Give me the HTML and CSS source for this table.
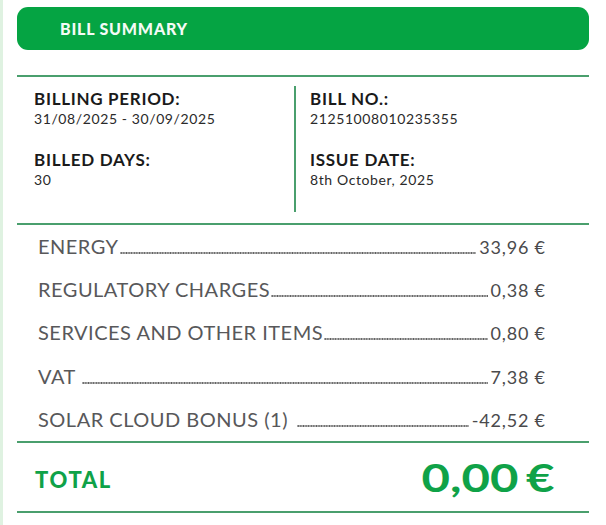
FILE: index.html
```html
<!DOCTYPE html>
<html>
<head>
<meta charset="utf-8">
<link rel="stylesheet" href="styles.css">
</head>
<body>
<div class="page">
  <div class="sheet">
    <div class="header">BILL SUMMARY</div>
    <div class="info">
      <div class="col col-left">
        <div class="field">
          <div class="label">BILLING PERIOD:</div>
          <div class="value">31/08/2025 - 30/09/2025</div>
        </div>
        <div class="field">
          <div class="label">BILLED DAYS:</div>
          <div class="value">30</div>
        </div>
      </div>
      <div class="col col-right">
        <div class="field">
          <div class="label">BILL NO.:</div>
          <div class="value">21251008010235355</div>
        </div>
        <div class="field">
          <div class="label">ISSUE DATE:</div>
          <div class="value">8th October, 2025</div>
        </div>
      </div>
    </div>
    <div class="rows">
      <div class="row"><span class="lbl">ENERGY</span><span class="dots"></span><span class="amt">33,96 €</span></div>
      <div class="row"><span class="lbl">REGULATORY CHARGES</span><span class="dots"></span><span class="amt">0,38 €</span></div>
      <div class="row"><span class="lbl">SERVICES AND OTHER ITEMS</span><span class="dots"></span><span class="amt">0,80 €</span></div>
      <div class="row"><span class="lbl">VAT</span><span class="dots spaced"></span><span class="amt">7,38 €</span></div>
      <div class="row"><span class="lbl">SOLAR CLOUD BONUS (1)</span><span class="dots spaced-lg"></span><span class="amt">-42,52 €</span></div>
    </div>
    <div class="total">
      <span class="total-label">TOTAL</span>
      <span class="total-amt">0,00<span class="euro">€</span></span>
    </div>
  </div>
</div>
</body>
</html>
```

FILE: styles.css
```css
html, body {
  margin: 0;
  padding: 0;
  background: #ffffff;
}

.page {
  width: 606px;
  height: 525px;
  box-sizing: border-box;
  border-left: 3px solid #dff2e1;
  font-family: "Lato", "Liberation Sans", sans-serif;
  color: #1b1b1b;
}

.sheet {
  width: 572px;
  margin-left: 14px;
  padding-top: 7px;
}

.header {
  height: 43px;
  line-height: 43px;
  border-radius: 11px;
  background: #05a443;
  color: #f4fbf6;
  font-weight: 900;
  font-size: 16px;
  letter-spacing: 0.8px;
  padding-left: 43px;
}

.info {
  margin-top: 25px;
  border-top: 2px solid #4a9f6d;
  padding: 9px 0 11px;
  display: grid;
  grid-template-columns: 277px 1fr;
}

.col {
  height: 126px;
  box-sizing: border-box;
  padding-top: 3px;
}

.col-left {
  padding-left: 17px;
}

.col-right {
  border-left: 2px solid #4a9f6d;
  padding-left: 14px;
}

.field + .field {
  margin-top: 23px;
}

.label {
  font-size: 17px;
  line-height: 19px;
  font-weight: 700;
  letter-spacing: 0.7px;
  color: #1a1a1a;
}

.value {
  margin-top: 2px;
  font-size: 14px;
  line-height: 17px;
  letter-spacing: 0.6px;
  color: #2a2a2a;
}

.rows {
  border-top: 2px solid #4a9f6d;
}

.row {
  height: 43.2px;
  display: flex;
  align-items: baseline;
  padding: 0 44px 0 21px;
  line-height: 43.2px;
  font-size: 20px;
  letter-spacing: 0.5px;
  color: #58585a;
}

.lbl {
  white-space: nowrap;
}

.dots {
  flex: 1;
  height: 2px;
  margin: 0 3px 0 1px;
  background-image: radial-gradient(circle, #5e5e5e 0.85px, transparent 1.15px);
  background-size: 2.6px 2px;
  background-repeat: repeat-x;
  background-position: 0 0;
}

.dots.spaced {
  margin-left: 6px;
}

.dots.spaced-lg {
  margin-left: 9px;
}

.amt {
  font-size: 18px;
  letter-spacing: 0.8px;
  margin-right: -0.8px;
  color: #4a4a4c;
  white-space: nowrap;
}

.total {
  border-top: 2px solid #4a9f6d;
  border-bottom: 2px solid #4a9f6d;
  height: 68px;
  display: flex;
  align-items: center;
  justify-content: space-between;
  padding: 0 34px 0 18px;
  color: #0fa248;
}

.total-label {
  font-size: 22px;
  font-weight: 900;
  letter-spacing: 1.6px;
  padding-top: 5px;
}

.total-amt {
  display: inline-block;
  font-size: 39px;
  font-weight: 700;
  transform: scaleX(1.26);
  transform-origin: right center;
}

.euro {
  margin-left: 6px;
}
```
